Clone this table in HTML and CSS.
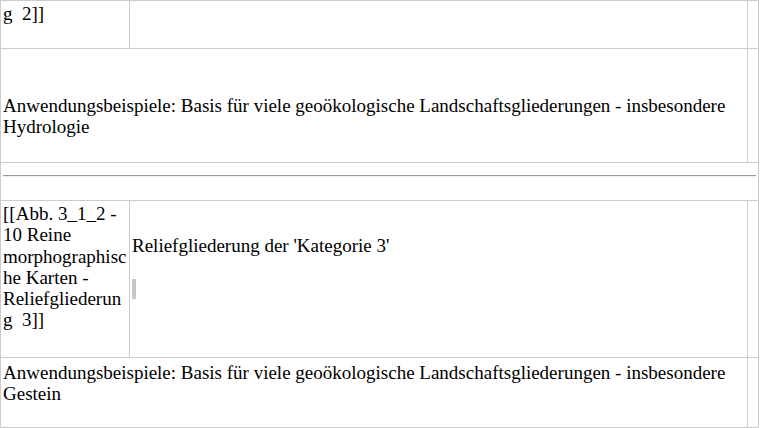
FILE: index.html
```html
<!DOCTYPE html>
<html lang="de">
<head>
    <meta charset="UTF-8">
    <title>Reliefgliederung</title>
    <link rel="stylesheet" href="styles.css">
</head>
<body>
    <div class="sheet">
        <div class="cell cell-fig">g&nbsp; 2]]</div>
        <div class="cell"></div>
        <div class="cell"></div>

        <div class="cell cell-wide cell-note">Anwendungsbeispiele: Basis für viele geoökologische Landschaftsgliederungen - insbesondere Hydrologie</div>
        <div class="cell"></div>

        <div class="cell cell-full cell-rule">
            <hr class="rule">
        </div>

        <div class="cell cell-fig">[[Abb. 3_1_2 - 10 Reine morphographische Karten - Reliefgliederung&nbsp; 3]]</div>
        <div class="cell cell-caption">
            <span class="handle"></span>
            Reliefgliederung der 'Kategorie 3'
        </div>
        <div class="cell"></div>

        <div class="cell cell-wide cell-note-top">Anwendungsbeispiele: Basis für viele geoökologische Landschaftsgliederungen - insbesondere Gestein</div>
        <div class="cell"></div>
    </div>
</body>
</html>
```

FILE: styles.css
```css
body {
    margin: 0;
    background: #ffffff;
    font-family: "Liberation Serif", "Times New Roman", serif;
    font-size: 19px;
    line-height: 1.12;
    color: #000000;
}

/* Tabelle als Raster: die 1px-Lücken ergeben die grauen Linien */
.sheet {
    display: grid;
    grid-template-columns: 128px 617px 10px;
    grid-template-rows: 47px 113px 37px 156px 69px;
    gap: 1px;
    padding: 1px;
    width: 757px;
    background: #cccccc;
}

.cell {
    background: #ffffff;
    padding: 2px;
    overflow-wrap: anywhere;
}

.cell-wide {
    grid-column: 1 / 3;
}

.cell-full {
    grid-column: 1 / 4;
}

.cell-fig {
    padding: 2px 2px 0 2px;
}

.cell-note {
    padding-top: 46px;
}

.cell-rule {
    padding: 12px 2px 0 2px;
}

.rule {
    margin: 0;
    border: 0;
    border-top: 1px solid #9a9a9a;
    border-bottom: 1px solid #eeeeee;
}

.cell-caption {
    position: relative;
    padding-top: 34px;
}

/* kleiner Ziehgriff am linken Rand */
.handle {
    position: absolute;
    left: 2px;
    top: 78px;
    width: 4px;
    height: 20px;
    background: #c8c8c8;
}

.cell-note-top {
    padding-top: 4px;
}
```
